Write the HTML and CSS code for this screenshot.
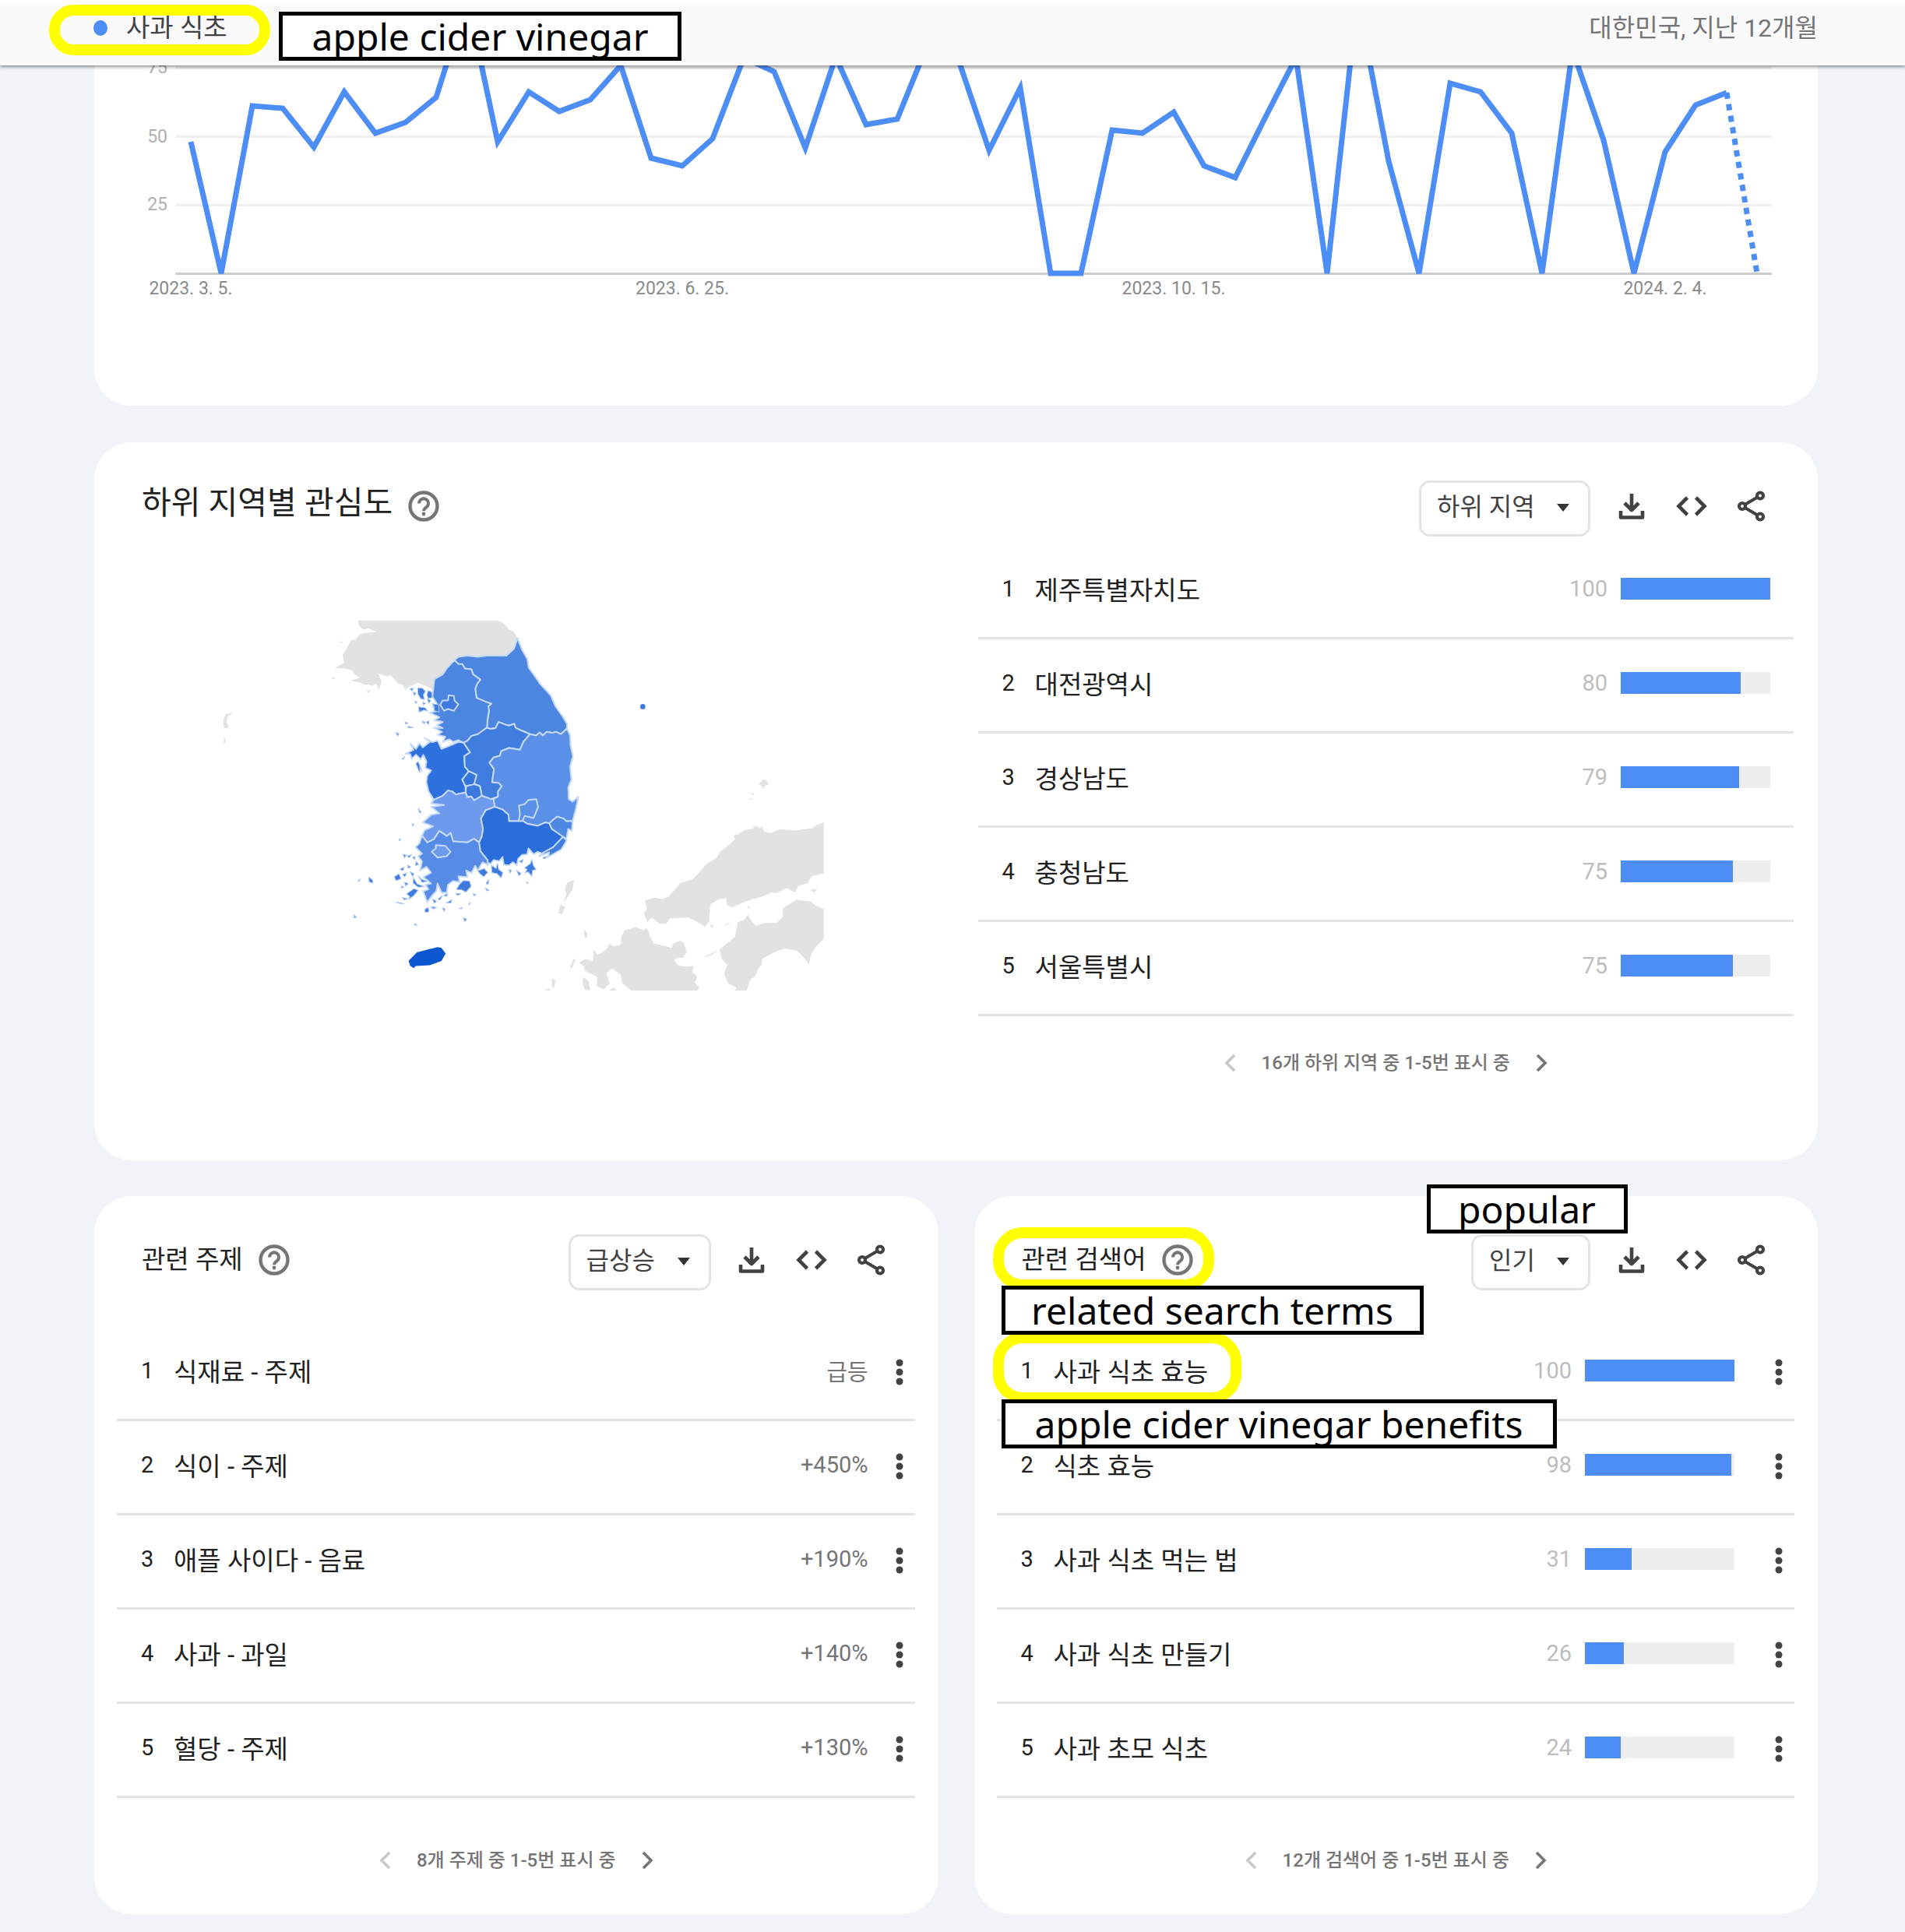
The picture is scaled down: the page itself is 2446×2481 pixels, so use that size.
FILE: index.html
```html
<!DOCTYPE html>
<html lang="ko">
<head>
<meta charset="utf-8">
<meta name="viewport" content="width=device-width, initial-scale=1">
<title>사과 식초 - 관심도</title>
<link rel="stylesheet" href="styles.css">
</head>
<body>
<svg class="sprite" aria-hidden="true">
  <symbol id="i-help" viewBox="0 0 40 40"><circle cx="20" cy="20" r="17.500" fill="none" stroke="currentColor" stroke-width="4.400"/><path d="M14 16.500a6 6 0 1 1 9.500 4.800c-2.200 1.600-3.500 2.500-3.500 5" fill="none" stroke="currentColor" stroke-width="4"/><circle cx="20" cy="30" r="2.400" fill="currentColor"/></symbol>
  <symbol id="i-download" viewBox="0 0 40 40"><path d="M20 4v20M11 16l9 9 9-9M6 26v8.500h28V26" fill="none" stroke="currentColor" stroke-width="4.600" stroke-linejoin="round"/></symbol>
  <symbol id="i-code" viewBox="0 0 40 40"><path d="M14.500 9L3.500 20l11 11M25.500 9l11 11-11 11" fill="none" stroke="currentColor" stroke-width="4.600"/></symbol>
  <symbol id="i-share" viewBox="0 0 40 40"><path d="M31 6.500L8 20l23 13.500" fill="none" stroke="currentColor" stroke-width="4"/><g fill="#fff" stroke="currentColor" stroke-width="4.200"><circle cx="31" cy="6.500" r="4"/><circle cx="8" cy="20" r="4"/><circle cx="31" cy="33.500" r="4"/></g></symbol>
  <symbol id="i-more" viewBox="0 0 12 34"><g fill="currentColor"><circle cx="6" cy="5" r="4.500"/><circle cx="6" cy="17" r="4.500"/><circle cx="6" cy="29" r="4.500"/></g></symbol>
  <symbol id="i-prev" viewBox="0 0 16 24"><path d="M13 2L3 12l10 10" fill="none" stroke="currentColor" stroke-width="3.600"/></symbol>
  <symbol id="i-next" viewBox="0 0 16 24"><path d="M3 2l10 10L3 22" fill="none" stroke="currentColor" stroke-width="3.600"/></symbol>
</svg>

<header class="topbar">
  <div class="term"><span class="dot"></span>사과 식초</div>
  <div class="scope">대한민국, 지난 12개월</div>
  <span class="ring ring-term"></span>
  <span class="note note-term">apple cider vinegar</span>
</header>

<main class="page">
  <section class="card card-chart">
    <svg class="chart" viewBox="121 84 2213 437" role="img" aria-label="시간 흐름에 따른 관심도 변화">
      <g class="grid-lines"><path d="M225 87H2275M225 175.500H2275M225 263.500H2275"/></g>
      <path class="axis" d="M225 351.500H2275"/>
      <polyline class="line" points="245,182 284,351 324,136 363,139 403,189 442,118 482,171 521,157 560,125 600,-2 639,182 679,118 718,143 758,128 797,84 836,203 876,213 915,178 955,74 994,92 1034,190 1073,73 1112,160 1152,153 1191,57 1231,78 1270,193 1310,113 1349,351 1388,351 1428,167 1467,171 1507,144 1546,213 1586,228 1625,150 1664,74 1704,351 1743,-2 1783,207 1822,351 1862,107 1901,118 1941,171 1980,351 2019,64 2059,180 2098,351 2138,195 2177,135 2217,119"/>
      <path class="line dotted" d="M2217 119L2256 351"/>
      <g class="tick y-tick"><text x="215" y="94">75</text><text x="215" y="183">50</text><text x="215" y="270">25</text></g>
      <g class="tick"><text x="245" y="378">2023. 3. 5.</text><text x="876" y="378">2023. 6. 25.</text><text x="1507" y="378">2023. 10. 15.</text><text x="2138" y="378">2024. 2. 4.</text></g>
    </svg>
  </section>

  <section class="card card-region">
    <div class="card-head">
      <h2 class="title title-large">하위 지역별 관심도</h2>
      <button class="help" aria-label="도움말"><svg><use href="#i-help"/></svg></button>
      <label class="picker"><select aria-label="지역 단위"><option>하위 지역</option></select><span class="caret"></span></label>
      <div class="tools">
        <button class="tool tool-low" aria-label="다운로드"><svg><use href="#i-download"/></svg></button>
        <button class="tool" aria-label="삽입"><svg><use href="#i-code"/></svg></button>
        <button class="tool" aria-label="공유"><svg><use href="#i-share"/></svg></button>
      </div>
    </div>
    <div class="region-body">
      <svg class="map" viewBox="121 699 1134 606" role="img" aria-label="하위 지역별 관심도 지도">
        <g transform="translate(260 770) scale(.333333)">
          <g class="land">
            <path d="M597 77L1137 77 1160 88 1180 112 1200 122 1212 145 1200 185 1170 213 985 217 962 232 940 262 925 285 893 303 888 345 860 330 830 318 800 330 780 345 770 325 750 318 735 300 725 288 710 292 675 280 690 310 680 345 668 320 652 330 640 322 625 325 610 318 570 308 605 298 585 285 575 270 550 262 510 260 545 240 540 210 555 185 570 155 590 150 605 130 625 125 670 122 640 108 618 112 605 100Z"/>
            <path d="M120 432L90 438 80 460 82 492 100 490 92 465 98 445ZM82 530l6 0 0 20-6 0ZM495 300l15-6-4 10ZM525 158l15 0-4 6ZM630 350l20-6-10 12Z"/>
            <path d="M1430 1078L1405 1085 1395 1110 1402 1130 1390 1160 1400 1150 1425 1110ZM1378 1170L1370 1205 1385 1208 1396 1180ZM1470 1270l10 10 2 15-8 8Z"/>
          </g>
          <g class="province">
            <path fill="#4d86e1" d="M1212 145L1230 190 1250 225 1256 260 1275 285 1300 322 1340 365 1360 410 1385 445 1403 475 1403 493 1380 515 1362 506 1345 510 1325 506 1310 520 1298 508 1285 520 1260 515 1240 505 1225 500 1205 490 1200 475 1180 482 1165 478 1140 468 1128 492 1110 495 1095 490 1098 455 1103 425 1100 408 1112 398 1090 390 1055 375 1050 340 1058 320 1070 305 1042 285 1035 265 1010 262 1000 245 985 245 970 230 985 217 1020 213 1060 217 1100 212 1170 213 1200 185Z"/>
            <path fill="#4d86e1" d="M970 230L985 245 1000 245 1010 262 1035 265 1042 285 1070 305 1058 320 1050 340 1055 375 1090 390 1112 398 1100 408 1103 425 1098 455 1095 490 1060 515 1035 522 1020 540 1005 548 985 538 965 545 950 535 925 545 935 525 905 518 922 506 890 490 925 492 902 480 925 468 892 462 912 450 875 432 908 425 885 408 905 402 885 370 888 345 893 303 925 285 940 262Z"/>
            <path fill="#3f7bdf" d="M915 402L925 385 945 385 948 365 968 368 970 385 985 400 968 425 945 418 930 425Z"/>
            <path fill="#2f71dc" d="M905 540L920 572 950 560 985 545 1005 548 1030 585 1008 600 1010 640 1025 658 1000 690 1012 715 1013 740 975 747 960 735 945 732 925 752 890 768 870 735 862 700 865 675 880 655 858 645 862 620 850 595 840 612 822 594 805 610 800 592 782 590 812 575 800 552 822 572 835 550 848 566 875 545 855 530 885 546Z"/>
            <path fill="#417cdf" d="M1005 548L1020 540 1035 522 1060 515 1095 490 1110 495 1128 492 1140 468 1165 478 1180 482 1200 475 1205 490 1225 500 1260 515 1235 545 1222 575 1180 568 1150 580 1145 598 1120 605 1105 625 1122 650 1115 700 1140 702 1152 715 1138 735 1138 755 1110 765 1075 752 1068 715 1045 705 1055 672 1025 658 1010 640 1008 600 1030 585Z"/>
            <path fill="#3474dd" d="M1025 658L1055 672 1045 710 1012 715 1000 690Z"/>
            <path fill="#3a79de" d="M1015 715L1045 708 1068 715 1075 752 1062 765 1045 770 1035 755 1020 758 1013 740Z"/>
            <path fill="#5a90e7" d="M1260 515L1285 520 1298 508 1310 520 1325 506 1345 510 1362 506 1380 515 1403 493 1415 520 1417 560 1426 600 1415 640 1420 690 1408 720 1410 765 1425 775 1447 755 1438 800 1425 850 1400 850 1390 840 1365 833 1350 845 1335 858 1320 855 1290 868 1250 860 1235 850 1180 850 1178 825 1155 805 1125 795 1120 765 1138 755 1138 735 1152 715 1140 702 1115 700 1122 650 1105 625 1120 605 1145 598 1150 580 1180 568 1222 575 1235 545Z"/>
            <path fill="#5a90e7" d="M1215 855L1222 825 1218 790 1240 785 1255 768 1285 765 1292 795 1275 838 1240 830 1232 850Z"/>
            <path fill="#6d9aec" d="M890 768L925 752 945 732 960 735 975 747 1013 740 1020 758 1035 755 1045 770 1075 752 1110 765 1120 765 1125 795 1090 808 1072 840 1080 880 1075 910 1065 932 1045 918 1020 932 965 928 955 895 940 908 930 900 912 888 890 920 865 932 845 905 855 885 888 870 848 855 880 825 912 820 880 795 930 788 880 782Z"/>
            <path fill="#568ce5" d="M845 905L865 932 890 920 912 888 930 900 940 908 955 895 965 928 1020 932 1045 918 1065 932 1070 965 1098 1000 1100 1020 1078 1008 1060 1040 1050 1022 1035 1050 1015 1040 1020 1065 985 1062 990 1085 965 1080 945 1095 940 1125 920 1125 905 1090 900 1120 885 1135 865 1162 850 1120 870 1112 858 1095 880 1090 850 1065 880 1048 862 1026 838 1040 845 1005 830 985 845 975 820 950 835 935Z"/>
            <path fill="#6d9aec" d="M882 968L898 955 898 942 935 945 955 968 940 985 905 990Z"/>
            <path fill="#2b6ddb" d="M1125 795L1155 805 1178 825 1180 850 1235 850 1250 860 1290 868 1320 855 1335 858 1345 880 1390 910 1350 950 1310 975 1290 968 1275 978 1255 955 1250 978 1230 980 1215 995 1210 1020 1195 1008 1180 1020 1160 1018 1155 988 1142 1004 1120 1000 1110 1014 1098 1010 1098 1000 1070 965 1065 932 1075 910 1080 880 1072 840 1090 808Z"/>
            <path fill="#5089e3" d="M1335 858L1350 845 1365 833 1390 840 1400 850 1425 850 1422 888 1408 880 1400 920 1388 910 1345 880Z"/>
            <path fill="#417cdf" d="M1388 910L1402 925 1380 960 1330 988 1335 970 1295 985 1310 972 1350 950Z"/>
          </g>
          <path fill="#0b57d0" d="M793 1388L825 1355 865 1345 905 1335 920 1338 936 1360 920 1388 875 1405 820 1408 814 1416 800 1408Z"/>
          <g class="isles">
            <path d="M828 338l18 0 12 12-8 14 4 18-14-4-10-16zM868 348l14 4 2 22-14 4-6-12zM798 340l14-2-6 10zM812 352l10 6-8 8zM832 410l26 4 8 12-14-4-18 8zM885 398l24 4 2 28-20-6 2-12zM845 465l12 4-4 6zM862 468l10-4-2 14zM780 468l10 4-8 4zM790 485l22 4-18 2zM745 508l12 6-6 8zM822 628l8 22 8 14-2-26 10 22-16-40zM768 610l10-8-4 10zM865 378l14 8-8 10zM848 392l10 4-8 6zM818 388l8 4-6 4z"/>
            <path d="M830 800l12 16-6 2zM808 860l6 4-6 4zM758 918l5 4-5 4zM772 978l12 2-6 12zM788 985l16-6-8 12zM808 990l10-4 0 12zM760 1035l16-8-4 14zM738 1065l18-12 8 18-18 8zM770 1055l16-4-8 14zM812 1068l14 24 28 10-24 2-20-16zM786 1130l28-20 16 6-18 22-18 12 4-10zM745 1162l32 6-24-2zM770 1145l20 4-14 4zM640 1066l14 10 2 12-14-4zM598 1080l10-8-6 10zM582 1210l10 10-8 2zM856 1190l12-8 4 16-14 4zM880 1180l22 2-14 6zM924 1184l10 4-4 10zM816 1246l10 2-8 4zM990 1186l12-4-6 6zM1005 1222l12 6-8 8zM790 1020l12 6-10 6zM800 1045l14 8-6 10zM778 1085l14 6-10 8zM822 1005l10 12-12 4zM765 1100l10 4-8 4zM830 1060l14 14 20 8-18 4z"/>
            <path d="M988 1095l16-16 24 2 6 20-20 22-16-8-20-2zM1060 1042l24-10 14 16-16 16-14-12zM975 1128l20 2-14 6zM1112 1020l18 12 6-20 4 24 16 12-6 20-16-16-20-4zM1092 1090l10-16-2 20zM940 1165l20-12-4 12zM906 1150l18-14-10 18zM885 1150l16 8-8 8zM1240 1030l22-16 6-16 6 24 10 14-14 4-2 22-14-16-12 2 8-12zM1180 1035l10 6-6 8zM1210 1040l16 12-8 8zM1248 1084l6 4-4 2zM1042 1130l10 2-6 6zM1310 990l18-4-12 10zM930 1135l14-6-6 12zM1220 1005l14-8-4 14zM1090 1108l12 8-8 2zM1025 1168l6-4-4 8z"/>
          </g>
        </g>
        <g transform="translate(660 900) scale(.333333)">
          <circle cx="495" cy="19" r="10" fill="#3f7bdf"/>
          <g class="land">
            <path d="M960 298l12 6 8 14-14 6-8 12-8-14-8-4 8-10zM905 350l20 4-6 6zM905 372l12 2-8 4z"/>
            <path d="M1192 464L1165 475 1150 487 1120 491 1080 496 1040 492 1020 492 985 507 960 497 955 482 945 487 930 478 915 490 880 497 865 510 845 515 850 530 830 550 795 575 780 600 740 625 715 655 685 685 640 697 620 722 595 750 570 760 540 755 503 765 510 800 500 815 512 848 530 832 560 855 585 855 600 835 670 830 700 845 735 867 750 845 755 780 790 760 815 757 820 785 840 792 890 770 970 745 990 735 1010 737 1050 718 1080 735 1095 708 1130 700 1145 672 1192 662Z"/>
            <path d="M450 1112L705 1112 712 1100 695 1080 705 1060 685 1040 692 1018 655 1020 630 1015 615 995 625 988 650 985 664 965 655 930 640 920 610 932 608 948 575 940 535 930 520 895 512 872 495 880 470 868 425 880 412 905 410 935 385 943 365 932 360 948 340 965 320 975 305 952 305 985 300 1000 275 990 250 1005 270 1020 270 1035 300 1050 320 1060 318 1095 345 1108 368 1085 355 1045 375 1028 410 1050 415 1082Z"/>
            <path d="M850 1112L895 1112 910 1070 925 1060 940 1030 953 1010 955 990 1000 965 1045 950 1090 960 1115 985 1135 1012 1142 975 1160 945 1192 912 1192 798 1160 785 1140 770 1085 763 1035 795 1033 830 1010 852 960 852 930 864 915 845 900 820 885 840 860 850 850 905 790 955 800 990 820 1015 808 1050 825 1085 855 1100Z"/>
            <path d="M265 1060l20 15 8 36-20 0-10-30zM228 990l8 4-14 32-8 0zM268 880l12 8-2 20-8-6zM145 1065l14 10-6 30-8-10zM110 1110l26-6 4 8zM365 1112l18-10 12 10zM725 985l62-28-30 20zM755 855l12 8-8 10zM900 785l8 8-8 4zM1140 725l28-4-14 14zM800 862l40-12-20 10z"/>
          </g>
        </g>
      </svg>
      <div class="region-list">
        <table class="rows">
          <colgroup><col class="c-rank"><col><col class="c-num"><col class="c-bar-wide"></colgroup>
          <tr><td class="rank">1</td><td>제주특별자치도</td><td class="num">100</td><td><div class="bar"><i style="width:100%"></i></div></td></tr>
          <tr><td class="rank">2</td><td>대전광역시</td><td class="num">80</td><td><div class="bar"><i style="width:80%"></i></div></td></tr>
          <tr><td class="rank">3</td><td>경상남도</td><td class="num">79</td><td><div class="bar"><i style="width:79%"></i></div></td></tr>
          <tr><td class="rank">4</td><td>충청남도</td><td class="num">75</td><td><div class="bar"><i style="width:75%"></i></div></td></tr>
          <tr><td class="rank">5</td><td>서울특별시</td><td class="num">75</td><td><div class="bar"><i style="width:75%"></i></div></td></tr>
        </table>
        <nav class="pager"><button disabled aria-label="이전"><svg><use href="#i-prev"/></svg></button><span>16개 하위 지역 중 1-5번 표시 중</span><button aria-label="다음"><svg><use href="#i-next"/></svg></button></nav>
      </div>
    </div>
  </section>

  <div class="pair">
    <section class="card card-related">
      <div class="card-head">
        <h2 class="title">관련 주제</h2>
        <button class="help" aria-label="도움말"><svg><use href="#i-help"/></svg></button>
        <label class="picker"><select aria-label="정렬"><option>급상승</option></select><span class="caret"></span></label>
        <div class="tools">
          <button class="tool tool-low" aria-label="다운로드"><svg><use href="#i-download"/></svg></button>
          <button class="tool" aria-label="삽입"><svg><use href="#i-code"/></svg></button>
          <button class="tool" aria-label="공유"><svg><use href="#i-share"/></svg></button>
        </div>
      </div>
      <table class="rows">
        <colgroup><col class="c-rank"><col><col class="c-rise"><col class="c-more"></colgroup>
        <tr><td class="rank">1</td><td>식재료 - 주제</td><td class="rise">급등</td><td><button class="more" aria-label="더보기"><svg><use href="#i-more"/></svg></button></td></tr>
        <tr><td class="rank">2</td><td>식이 - 주제</td><td class="rise">+450%</td><td><button class="more" aria-label="더보기"><svg><use href="#i-more"/></svg></button></td></tr>
        <tr><td class="rank">3</td><td>애플 사이다 - 음료</td><td class="rise">+190%</td><td><button class="more" aria-label="더보기"><svg><use href="#i-more"/></svg></button></td></tr>
        <tr><td class="rank">4</td><td>사과 - 과일</td><td class="rise">+140%</td><td><button class="more" aria-label="더보기"><svg><use href="#i-more"/></svg></button></td></tr>
        <tr><td class="rank">5</td><td>혈당 - 주제</td><td class="rise">+130%</td><td><button class="more" aria-label="더보기"><svg><use href="#i-more"/></svg></button></td></tr>
      </table>
      <nav class="pager"><button disabled aria-label="이전"><svg><use href="#i-prev"/></svg></button><span>8개 주제 중 1-5번 표시 중</span><button aria-label="다음"><svg><use href="#i-next"/></svg></button></nav>
    </section>

    <section class="card card-related">
      <div class="card-head">
        <h2 class="title">관련 검색어</h2>
        <button class="help" aria-label="도움말"><svg><use href="#i-help"/></svg></button>
        <label class="picker"><select aria-label="정렬"><option>인기</option></select><span class="caret"></span></label>
        <div class="tools">
          <button class="tool tool-low" aria-label="다운로드"><svg><use href="#i-download"/></svg></button>
          <button class="tool" aria-label="삽입"><svg><use href="#i-code"/></svg></button>
          <button class="tool" aria-label="공유"><svg><use href="#i-share"/></svg></button>
        </div>
      </div>
      <table class="rows">
        <colgroup><col class="c-rank"><col><col class="c-num"><col class="c-bar"><col class="c-more"></colgroup>
        <tr><td class="rank">1</td><td>사과 식초 효능</td><td class="num">100</td><td><div class="bar"><i style="width:100%"></i></div></td><td><button class="more" aria-label="더보기"><svg><use href="#i-more"/></svg></button></td></tr>
        <tr><td class="rank">2</td><td>식초 효능</td><td class="num">98</td><td><div class="bar"><i style="width:98%"></i></div></td><td><button class="more" aria-label="더보기"><svg><use href="#i-more"/></svg></button></td></tr>
        <tr><td class="rank">3</td><td>사과 식초 먹는 법</td><td class="num">31</td><td><div class="bar"><i style="width:31%"></i></div></td><td><button class="more" aria-label="더보기"><svg><use href="#i-more"/></svg></button></td></tr>
        <tr><td class="rank">4</td><td>사과 식초 만들기</td><td class="num">26</td><td><div class="bar"><i style="width:26%"></i></div></td><td><button class="more" aria-label="더보기"><svg><use href="#i-more"/></svg></button></td></tr>
        <tr><td class="rank">5</td><td>사과 초모 식초</td><td class="num">24</td><td><div class="bar"><i style="width:24%"></i></div></td><td><button class="more" aria-label="더보기"><svg><use href="#i-more"/></svg></button></td></tr>
      </table>
      <nav class="pager"><button disabled aria-label="이전"><svg><use href="#i-prev"/></svg></button><span>12개 검색어 중 1-5번 표시 중</span><button aria-label="다음"><svg><use href="#i-next"/></svg></button></nav>
      <span class="ring ring-title"></span>
      <span class="ring ring-row"></span>
      <span class="note note-popular">popular</span>
      <span class="note note-terms">related search terms</span>
      <span class="note note-benefits">apple cider vinegar benefits</span>
    </section>
  </div>
</main>
</body>
</html>
```
FILE: styles.css
```css
* { box-sizing: border-box; }

body {
  margin: 0;
  background: #f0f3f8;
  color: #212121;
  font-family: Roboto, "Noto Sans CJK KR", sans-serif;
  font-size: 32px;
}

button {
  padding: 0;
  border: 0;
  background: none;
  color: inherit;
  font: inherit;
}

.sprite { display: none; }

/* Sticky summary bar */
.topbar {
  position: sticky;
  top: 0;
  z-index: 2;
  display: flex;
  align-items: flex-start;
  justify-content: space-between;
  height: 84px;
  padding: 11px 112px 0 120px;
  border-top: 7px solid #fff;
  background: #fafafa;
  box-shadow: 0 1px 5px rgba(0, 0, 0, .6);
  line-height: 36px;
}
.term { display: flex; align-items: center; gap: 24px; color: #424242; font-size: 33px; }
.dot { width: 18px; height: 20px; border-radius: 50%; background: #4c8df6; }
.scope { color: #757575; }

.page { padding: 0 112px 23px 121px; }

.card {
  position: relative;
  border-radius: 48px;
  background: #fff;
}
.card-chart { border-radius: 0 0 48px 48px; }

/* Interest over time */
.chart { display: block; width: 100%; height: auto; }
.grid-lines { stroke: #eee; stroke-width: 3; }
.axis { stroke: #ccc; stroke-width: 3; }
.line { fill: none; stroke: #4c8df6; stroke-width: 7; }
.dotted { stroke-dasharray: 8 7; }
.tick { fill: #8a8a8a; font-size: 23px; text-anchor: middle; }
.y-tick { fill: #b0b0b0; text-anchor: end; }

/* Card header */
.card-head {
  display: flex;
  align-items: center;
  padding: 49px 47px 0 61px;
}
.title { margin: 0; font-size: 33px; font-weight: 400; line-height: 48px; padding-bottom: 6px; }
.title-large { font-size: 41px; padding-bottom: 14px; }
.help { width: 40px; height: 40px; margin: 0 auto 6px 20px; color: #757575; }
.help svg { display: block; width: 40px; height: 40px; }
.picker { position: relative; margin-right: 14px; }
.picker select {
  display: block;
  height: 72px;
  padding: 0 68px 4px 20px;
  border: 3px solid #e4e4e4;
  border-radius: 14px;
  appearance: none;
  background: #fff;
  color: #424242;
  font: inherit;
}
.caret {
  position: absolute;
  top: 30px;
  right: 27px;
  border: 8px solid transparent;
  border-top: 10px solid #333;
  border-bottom: 0;
  pointer-events: none;
}
.tools { display: flex; color: #424242; }
.tool { width: 77px; height: 40px; margin-bottom: 6px; }
.tool svg { display: block; width: 40px; height: 40px; margin: 0 auto; }
.tool-low { margin-bottom: 0; }

/* Ranked lists */
.rows {
  width: 100%;
  border-spacing: 0;
  table-layout: fixed;
}
.rows td {
  height: 121px;
  padding: 0 0 6px;
  border-bottom: 3px solid #e4e4e4;
  font-size: 33px;
  white-space: nowrap;
}
.rows .rank { padding-left: 31px; font-size: 29px; }
.rows .num { padding-right: 17px; color: #bdbdbd; font-size: 29px; text-align: right; }
.rows .rise { color: #757575; font-size: 29px; text-align: right; }
.c-rank { width: 73px; }
.c-num { width: 120px; }
.c-bar { width: 192px; }
.c-bar-wide { width: 222px; }
.c-rise { width: 160px; }
.c-more { width: 60px; }
.c-bar + .c-more { width: 77px; }
.bar { width: 192px; height: 28px; background: #eee; }
.bar i { display: block; height: 100%; background: #4c8df6; }
.more { display: block; width: 40px; height: 40px; margin-left: auto; color: #424242; }
.more svg { display: block; width: 12px; height: 34px; margin: 4px auto 0; }

.pager {
  display: flex;
  align-items: center;
  justify-content: center;
  gap: 32px;
  color: #757575;
  font-size: 24px;
  font-weight: 500;
  line-height: 40px;
}
.pager svg { display: block; width: 16px; height: 24px; }
.pager button:disabled { color: #c8c8c8; }

/* Interest by subregion */
.card-region { margin-top: 47px; }
.region-body {
  display: grid;
  grid-template-columns: 1134fr 1047fr;
  padding: 11px 31px 105px 0;
}
.region-list .pager { padding-top: 40px; }
.map { display: block; width: 100%; height: auto; }
.land { fill: #e2e2e2; }
.province { stroke: #c5dafa; stroke-width: 6; stroke-linejoin: round; }
.isles { fill: #3f7bdf; stroke: #a9c6f5; stroke-width: 3; }

/* Related topics and queries */
.pair {
  display: grid;
  grid-template-columns: 1fr 1fr;
  gap: 46px;
  margin-top: 46px;
}
.card-related .rows { width: calc(100% - 59px); margin: 47px 30px 0 29px; }
.card-related .pager { padding: 60px 0 49px; }

/* Translation notes laid over the page */
.ring {
  position: absolute;
  border: 14px solid #ff0;
  border-radius: 38px;
}
.ring-term { left: 63px; top: -1px; width: 284px; height: 65px; border-radius: 32px; }
.ring-title { left: 24px; top: 40px; width: 284px; height: 81px; }
.ring-row { left: 24px; top: 175px; width: 319px; height: 91px; }
.note {
  position: absolute;
  height: 63px;
  border: 5px solid #000;
  background: #fff;
  color: #000;
  font-family: "Noto Sans", "Noto Sans CJK KR", sans-serif;
  font-size: 48px;
  font-weight: 400;
  line-height: 54px;
  text-align: center;
  white-space: nowrap;
}
.note-term { left: 358px; top: 8px; width: 517px; }
.note-popular { left: 581px; top: -15px; width: 258px; }
.note-terms { left: 35px; top: 115px; width: 542px; }
.note-benefits { left: 35px; top: 261px; width: 713px; }
```
